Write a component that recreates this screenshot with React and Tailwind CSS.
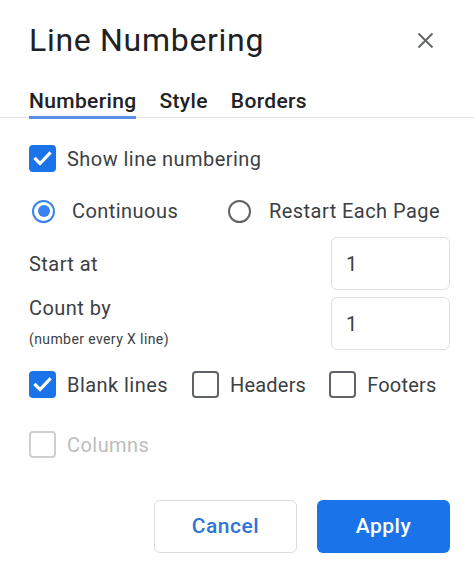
import { useState } from 'react';

const Check = () => (
  <svg viewBox="0 0 27 27" className="w-full h-full">
    <polyline points="6.5,14 11,18.5 20.5,8.5" fill="none" stroke="#fff" strokeWidth="3.2" strokeLinecap="square" />
  </svg>
);

const Checkbox = ({ checked, disabled }) => {
  if (checked) {
    return (
      <span className="size-[27px] shrink-0 rounded-[4px] bg-[#1a73e8]">
        <Check />
      </span>
    );
  }
  return (
    <span className={`size-[27px] shrink-0 rounded-[4px] border-[2.5px] ${disabled ? 'border-[#cfcfcf]' : 'border-[#5f6368]'}`}></span>
  );
};

const Radio = ({ checked }) => (
  <span className={`size-[23px] shrink-0 rounded-full border-[2.5px] flex items-center justify-center ${checked ? 'border-[#3b82f0]' : 'border-[#5f6368]'}`}>
    {checked && <span className="size-[12px] rounded-full bg-[#3b82f0]"></span>}
  </span>
);

const NumberBox = ({ value }) => (
  <div className="w-[119px] h-[53px] rounded-[6px] border border-[#e0e0e0] flex items-center pl-[14px] text-[20px] text-[#3c4043]">
    {value}
  </div>
);

export default function App() {
  const [tab] = useState('Numbering');
  const tabs = ['Numbering', 'Style', 'Borders'];

  return (
    <div className="w-[474px] h-[572px] bg-white font-['Roboto',sans-serif] text-[#3c4043] tracking-[0.45px] overflow-hidden">
      {/* Header */}
      <div className="flex items-center justify-between pl-[29px] pr-[40px] pt-[20px]">
        <h1 className="text-[32px] leading-[40px] tracking-[0.7px] text-[#202124]">Line Numbering</h1>
        <svg viewBox="0 0 17 17" className="w-[17px] h-[17px]">
          <path d="M1.5 1.5 L15.5 15.5 M15.5 1.5 L1.5 15.5" stroke="#5f6368" strokeWidth="1.8" fill="none" />
        </svg>
      </div>

      {/* Tabs */}
      <div className="mt-[29px] flex gap-[23px] pl-[29px] border-b border-[#e3e3e3]">
        {tabs.map((t) => (
          <div key={t} className="relative pb-[4px] text-[21px] leading-[24px] font-medium tracking-[0.35px] text-[#202124]">
            {t}
            {t === tab && <span className="absolute left-0 right-0 bottom-[-2px] h-[3px] bg-[#5b8ee6]"></span>}
          </div>
        ))}
      </div>

      <div className="pl-[29px] pr-[24px]">
        {/* Show line numbering */}
        <div className="mt-[27px] flex items-center gap-[11px]">
          <Checkbox checked />
          <span className="text-[20px] leading-[24px]">Show line numbering</span>
        </div>

        {/* Radios */}
        <div className="mt-[27px] flex items-center pl-[3px]">
          <div className="w-[196px] flex items-center gap-[17px]">
            <Radio checked />
            <span className="text-[20px] leading-[24px]">Continuous</span>
          </div>
          <div className="flex items-center gap-[18px]">
            <Radio />
            <span className="text-[20px] leading-[24px]">Restart Each Page</span>
          </div>
        </div>

        {/* Start at */}
        <div className="mt-[14px] flex items-center justify-between">
          <span className="text-[20px] leading-[24px]">Start at</span>
          <NumberBox value="1" />
        </div>

        {/* Count by */}
        <div className="mt-[7px] flex items-start justify-between">
          <div>
            <div className="text-[20px] leading-[22px]">Count by</div>
            <div className="mt-[10px] text-[14px] leading-[20px] tracking-[0.4px]">(number every X line)</div>
          </div>
          <NumberBox value="1" />
        </div>

        {/* Include */}
        <div className="mt-[21px] flex items-center">
          <div className="flex items-center gap-[11px]">
            <Checkbox checked />
            <span className="text-[20px] leading-[24px]">Blank lines</span>
          </div>
          <div className="ml-[24px] flex items-center gap-[11px]">
            <Checkbox />
            <span className="text-[20px] leading-[24px] tracking-[0.2px]">Headers</span>
          </div>
          <div className="ml-[23px] flex items-center gap-[11px]">
            <Checkbox />
            <span className="text-[20px] leading-[24px] tracking-[0.2px]">Footers</span>
          </div>
        </div>

        {/* Columns (disabled) */}
        <div className="mt-[33px] flex items-center gap-[11px]">
          <Checkbox disabled />
          <span className="text-[20px] leading-[24px] text-[#bdbdbd]">Columns</span>
        </div>

        {/* Actions */}
        <div className="mt-[42px] flex justify-end gap-[20px]">
          <button className="w-[143px] h-[53px] rounded-[6px] border border-[#dadce0] bg-white text-[21px] font-medium tracking-[0.5px] text-[#2f74d8]">
            Cancel
          </button>
          <button className="w-[133px] h-[53px] rounded-[6px] bg-[#1a73e8] text-[21px] font-medium tracking-[0.5px] text-white">
            Apply
          </button>
        </div>
      </div>
    </div>
  );
}
